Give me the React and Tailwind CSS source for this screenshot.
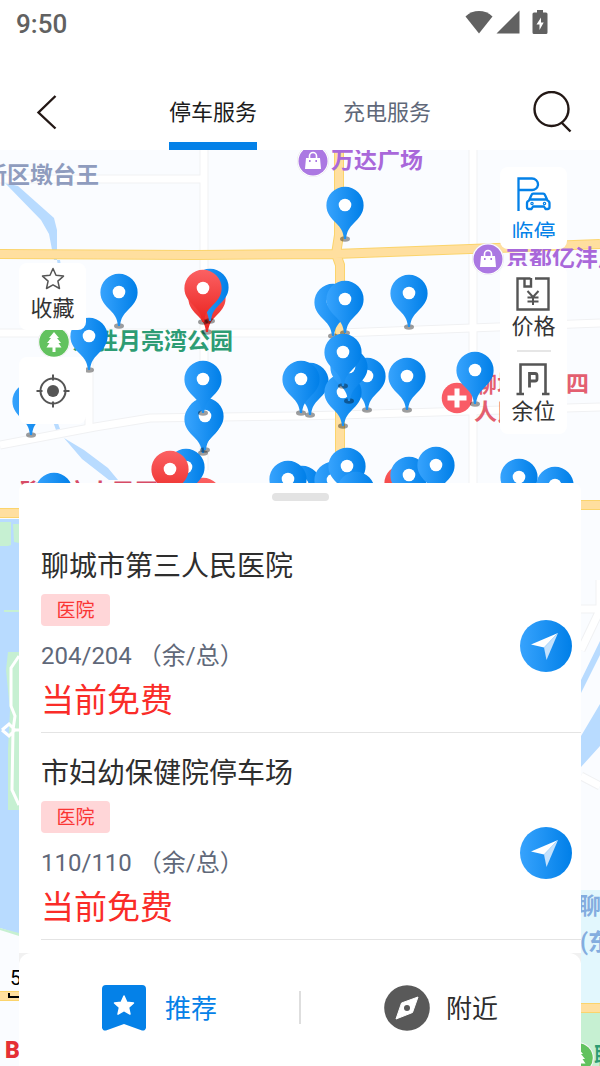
import { useState } from "react";

// 停车场标记，坐标为地图画布上圆孔中心
const pins = [
  { x: 119, y: 142 },
  { x: 345, y: 55 },
  { x: 207, y: 148, red: true },
  { x: 210, y: 137 },
  { x: 203, y: 138, red: true },
  { x: 409, y: 143 },
  { x: 333, y: 152 },
  { x: 345, y: 149 },
  { x: 89, y: 186 },
  { x: 31, y: 251 },
  { x: 203, y: 269 },
  { x: 205, y: 266 },
  { x: 203, y: 229 },
  { x: 310, y: 231 },
  { x: 301, y: 229 },
  { x: 367, y: 226 },
  { x: 343, y: 242 },
  { x: 349, y: 217 },
  { x: 343, y: 202 },
  { x: 407, y: 226 },
  { x: 475, y: 220 },
  { x: 54, y: 341 },
  { x: 203, y: 346, red: true },
  { x: 186, y: 317 },
  { x: 170, y: 319, red: true },
  { x: 302, y: 334 },
  { x: 288, y: 329 },
  { x: 333, y: 330 },
  { x: 347, y: 316 },
  { x: 356, y: 340 },
  { x: 403, y: 333, red: true },
  { x: 409, y: 325 },
  { x: 436, y: 315 },
  { x: 519, y: 327 },
  { x: 555, y: 335 },
];

const parkingLots = [
  { id: 1, name: "聊城市第三人民医院", tag: "医院", free: 204, total: 204 },
  { id: 2, name: "市妇幼保健院停车场", tag: "医院", free: 110, total: 110 },
];

const Gradients = () => (
  <svg className="absolute size-0" aria-hidden="true">
    <defs>
      <linearGradient id="blue" x1="0" y1="0" x2="1" y2="0">
        <stop offset="0" stopColor="#37a3fd" />
        <stop offset="1" stopColor="#007fe8" />
      </linearGradient>
      <linearGradient id="red" x1="0" y1="0" x2="0" y2="1">
        <stop offset="0" stopColor="#fb6163" />
        <stop offset="1" stopColor="#ea2420" />
      </linearGradient>
    </defs>
  </svg>
);

const Pin = ({ x, y, red }) => (
  <button
    aria-label="停车场"
    className="absolute h-[56px] w-[38px]"
    style={{ left: x - 19, top: y - 19 }}
  >
    <svg viewBox="0 0 38 56" className="size-full">
      <ellipse cx="19" cy="53" rx="5" ry="2.7" fill="#000" fillOpacity=".38" />
      <path
        fillRule="evenodd"
        fill={red ? "url(#red)" : "url(#blue)"}
        d="M19 .8A18.5 18.5 0 0 1 37.6 19.5c0 8-5 13-9.6 17.5-4.500 4.500-7.200 8-8 16h-2c-.8-8-3.500-11.500-8-16C5.400 32.500.4 27.500.4 19.500A18.500 18.500 0 0 1 19 .8Z"
      />
      <circle cx="19" cy="19" r="6.3" fill="#fff" />
    </svg>
  </button>
);

const MapBase = () => (
  <svg
    viewBox="0 0 600 916"
    className="absolute top-0 left-0 h-[916px] w-[600px]"
    fill="none"
    aria-hidden="true"
  >
    {/* 水系 */}
    <path
      fill="#b8dbff"
      d="M5 33 18 36 54 68 57 80V110H54L49 84 41 70ZM57 110h3l2 12h-3ZM76 180l7 20-2 2-7-6ZM50 263l6 17 4-1-6-17ZM64 288l20 12 24 18 10 12h-9L82 309Z"
    />
    <path fill="#b8dbff" d="M0 369H19V784L0 778Z" />
    <path
      fill="#c6f0d2"
      d="M0 372H11V395L8 396H0ZM13 374h6v19l-5-1ZM4 460h15v2H4ZM8 502H19V660H8V600l2-40-4-40ZM0 778l19 5v3L0 780Z"
    />
    <path stroke="#fff" strokeWidth="3" d="M19 506 11 518V556L15 566 13 580 12 640 19 655M2 580l7-6 6 6M2 580l7 6 6-6h4" />
    <path fill="#b8dbff" d="M600 491V505L581 543V530ZM600 554V596L581 617V586Z" />
    <path fill="#e2f7fd" d="M581 740H600V853H581Z" />
    <path fill="#c6f0d2" d="M581 858H600V916H581Z" />

    {/* 普通道路 */}
    <g stroke="#f0f1f3" strokeWidth="9">
      <path d="M0 29H203M204 0V320M473 0V333M89 183V280" />
      <path d="M0 183H340L600 173M0 295 95 277 150 268 300 266 340 265 600 257" />
      <path d="M581 459H600M600 430V460L581 500M581 626 600 636" />
    </g>
    <g stroke="#fff" strokeWidth="7">
      <path d="M0 29H203M204 0V320M473 0V333M89 183V280" />
      <path d="M0 183H340L600 173M0 295 95 277 150 268 300 266 340 265 600 257" />
      <path d="M581 459H600M600 430V460L581 500M581 626 600 636" />
    </g>

    {/* 主干道 */}
    <g stroke="#fbd46c" strokeWidth="10">
      <path d="M339 0V85L336 104 340 115V333M0 104 195 105 335 104 470 99 600 94" />
      <path d="M0 363H19M581 355H600M0 846H19M581 858H600" />
    </g>
    <g stroke="#ffdf9f" strokeWidth="8">
      <path d="M339 0V85L336 104 340 115V333M0 104 195 105 335 104 470 99 600 94" />
      <path d="M0 363H19M581 355H600M0 846H19M581 858H600" />
    </g>
    <path stroke="#000" strokeWidth="2" d="M9 843V847H40V843" />
  </svg>
);

const MallIcon = () => (
  <svg viewBox="0 0 32 32" className="size-8">
    <circle cx="16" cy="16" r="16" fill="#e6e6ea" />
    <circle cx="16" cy="16" r="15.500" fill="#fff" />
    <circle cx="16" cy="16" r="14.500" fill="#ab78e2" />
    <path fill="#fff" d="M9 13h14l1 11H8Z" />
    <path stroke="#fff" strokeWidth="1.600" fill="none" d="M12.500 14v-3a3.500 3.500 0 0 1 7 0v3" />
    <path fill="#ab78e2" d="M12 15h1.600v2H12ZM18.400 15H20v2h-1.600Z" />
  </svg>
);

const TreeIcon = () => (
  <svg viewBox="0 0 32 32" className="size-8">
    <circle cx="16" cy="16" r="16" fill="#e6e6ea" />
    <circle cx="16" cy="16" r="15.500" fill="#fff" />
    <circle cx="16" cy="16" r="14.800" fill="#62c25f" />
    <path
      fill="#fff"
      d="m16 6 5 6h-2l4 5h-2.500l3 4.500H17.500V26h-3v-4.500h-6l3-4.500H9l4-5h-2Z"
    />
  </svg>
);

const HospitalIcon = () => (
  <svg viewBox="0 0 32 32" className="size-8">
    <circle cx="16" cy="16" r="16" fill="#fff" />
    <circle cx="16" cy="16" r="15.300" fill="#f95c66" />
    <path fill="#fff" d="M13.500 6.500h5v7h7v5h-7v7h-5v-7h-7v-5h7Z" />
  </svg>
);

const MapLabels = () => (
  <div className="text-[23px] leading-7 font-bold whitespace-nowrap">
    <span className="absolute top-[12px] left-[-16px] text-[#8f9cbe]">新区墩台王</span>
    <span className="absolute top-[-5px] left-[297px]"><MallIcon /></span>
    <span className="absolute top-[-3px] left-[331px] text-[#a968da]">万达广场</span>
    <span className="absolute top-[93px] left-[472px]"><MallIcon /></span>
    <span className="absolute top-[95px] left-[506px] text-[#a968da]">京都亿沣广场</span>
    <span className="absolute top-[176px] left-[38px]"><TreeIcon /></span>
    <span className="absolute top-[178px] left-[72px] text-[#2d9c74]">东胜月亮湾公园</span>
    <span className="absolute top-[232px] left-[441px]"><HospitalIcon /></span>
    <span className="absolute top-[221px] left-[474px] text-[#e35f70]">
      聊城市第四
      <br />
      人民医院
    </span>
    <span className="absolute top-[329px] left-[20px] text-[#d74b66]">聊城市人民医院</span>
    <span className="absolute top-[743px] left-[578px] text-[#84addf]">聊城大学</span>
    <span className="absolute top-[779px] left-[580px] text-[#84addf]">(东校区)</span>
    <span className="absolute top-[892px] left-[562px]"><TreeIcon /></span>
    <span className="absolute top-[893px] left-[594px] text-[#2d9c74]">聊城公园</span>
    <span className="absolute top-[814px] left-[10px] text-[20px] font-normal text-black">500米</span>
    <span className="absolute top-[887px] left-[5px] font-black text-[#e52f35]">Bai</span>
  </div>
);

const StatusBar = () => (
  <div className="flex h-12 items-center justify-between pr-[52px] pl-4 text-[#616161]">
    <span className="text-[26px] leading-8 font-medium">9:50</span>
    <div className="flex items-center gap-[3px] pb-1">
      <svg viewBox="0 0 28 24" className="h-6 w-7" fill="currentColor">
        <path d="M14 23.500.5 6.500C8-.8 20-.8 27.500 6.500Z" />
      </svg>
      <svg viewBox="0 0 24 24" className="size-6" fill="currentColor">
        <path d="M23.500.500v23H.5Z" />
      </svg>
      <svg viewBox="0 0 16 24" className="ml-[9px] h-6 w-4" fill="currentColor">
        <path
          fillRule="evenodd"
          d="M5 0h6v2.500h3a1.500 1.500 0 0 1 1.500 1.500v18.500A1.500 1.500 0 0 1 14 24H2A1.500 1.500 0 0 1 .5 22.500V4A1.500 1.500 0 0 1 2 2.500h3ZM9 7.500 4.500 14.500h3V20l4.200-7.500H9Z"
        />
      </svg>
    </div>
  </div>
);

const NavBar = ({ tab, setTab }) => (
  <div className="flex h-[102px] justify-between px-[27px] pt-6">
    <button aria-label="返回" className="flex h-20 w-10 items-center justify-center">
      <svg viewBox="0 0 24 36" className="h-9 w-6" fill="none" stroke="#231815" strokeWidth="2.400">
        <path d="M20.500 2 3.500 18.500l17 16" />
      </svg>
    </button>
    <div role="tablist" className="flex gap-[86px] text-[22px]">
      {["停车服务", "充电服务"].map((name) => (
        <button
          key={name}
          role="tab"
          aria-selected={tab === name}
          onClick={() => setTab(name)}
          className={`border-b-8 pt-[11px] ${
            tab === name
              ? "border-[#0481e8] text-[#1c1c1c]"
              : "border-transparent text-[#606879]"
          }`}
        >
          {name}
        </button>
      ))}
    </div>
    <button aria-label="搜索" className="flex h-20 w-10 items-center">
      <svg viewBox="0 0 40 42" className="h-[42px] w-10" fill="none" stroke="#231815" strokeWidth="2.400">
        <circle cx="18.500" cy="18" r="17" />
        <path d="m28.500 31.500 9 9" />
      </svg>
    </button>
  </div>
);

const ParkingCarIcon = () => (
  <svg viewBox="0 0 34 34" className="h-[34px] w-[34px]" fill="none" stroke="#0481e8" strokeWidth="2.300">
    <path d="M1.500 34V1.500H15a6 6 0 0 1 6 6v.5a6 6 0 0 1-6 5H2" />
    <path
      strokeLinejoin="round"
      d="M12 23.500 14.500 18a2 2 0 0 1 2-1.300h9.500a2 2 0 0 1 2 1.300l2.500 5.500a3 3 0 0 1 2 3V30a2 2 0 0 1-2 2h-2l-1.500-2.500H16L14.500 32H12a2 2 0 0 1-2-2v-3.500a3 3 0 0 1 2-3ZM12.500 22.500H30"
    />
    <circle cx="15" cy="26.500" r=".6" />
    <circle cx="27.500" cy="26.500" r=".6" />
  </svg>
);

const PriceIcon = () => (
  <svg viewBox="0 0 34 34" className="h-[34px] w-[34px]" fill="none" stroke="#555" strokeWidth="2.400">
    <path d="M14.500 1.500H1.500v31h31v-31H19M8.500 1.500V9.500h6.500V1" />
    <path strokeWidth="2" d="m11.500 14 5.500 6 5.500-6M17 20v8M11.500 20.500h11M11.500 24.500h11" />
  </svg>
);

const SpaceIcon = () => (
  <svg viewBox="0 0 34 34" className="h-[34px] w-[34px]" fill="none" stroke="#555" strokeWidth="2.600">
    <path d="M4.500 31V2.500h25V31M.5 32h7.500M26 32h7.500" />
    <path strokeWidth="2.800" d="M13.500 25.500v-14h5.500a2 2 0 0 1 2 2v3.500a2 2 0 0 1-2 2h-5.500" />
  </svg>
);

const MapControls = () => (
  <div className="relative flex h-[333px] items-start justify-between pr-[33px] pl-[19px] text-[22px] leading-7 text-[#333]">
    <div className="mt-[113px] flex flex-col gap-[27px]">
      <button className="flex h-[67px] w-[67px] flex-col items-center rounded-lg bg-white pt-1">
        <svg viewBox="0 0 24 24" className="size-6" fill="none" stroke="#555" strokeWidth="1.500" strokeLinejoin="round">
          <path d="m12 1.500 3 6.800 7.500.8-5.600 5 1.600 7.400L12 17.800l-6.500 3.700 1.600-7.400-5.600-5 7.500-.8Z" />
        </svg>
        <span className="mt-1">收藏</span>
      </button>
      <button aria-label="定位" className="flex h-[67px] w-[67px] items-center justify-center rounded-lg bg-white">
        <svg viewBox="0 0 34 34" className="h-[34px] w-[34px]" fill="none" stroke="#555" strokeWidth="2">
          <circle cx="17" cy="17" r="12.500" />
          <circle cx="17" cy="17" r="6" fill="#555" stroke="none" />
          <path d="M17 .5v6M17 27.500v6M.5 17h6M27.500 17h6" />
        </svg>
      </button>
    </div>

    <div className="mt-[17px] flex w-[67px] flex-col gap-[17px]">
      <button className="flex h-[82px] flex-col items-center rounded-lg bg-white pt-[10px] text-[#0481e8]">
        <ParkingCarIcon />
        <span className="mt-2 h-[19px] overflow-hidden">临停</span>
      </button>
      <div className="flex flex-col items-center rounded-lg bg-white pt-[11px] pb-2">
        <button className="flex flex-col items-center gap-0.5">
          <PriceIcon />
          <span>价格</span>
        </button>
        <hr className="mt-[9px] mb-[10px] w-[34px] border-t-2 border-[#e6e6e6]" />
        <button className="flex flex-col items-center gap-0.5">
          <SpaceIcon />
          <span>余位</span>
        </button>
      </div>
    </div>
  </div>
);

const LotItem = ({ lot }) => (
  <li className="ml-[22px] flex items-center justify-between border-b border-[#e4e4e4] pt-[21px] pr-[9px] pb-[9px]">
    <div>
      <h2 className="text-[28px] leading-10 text-[#2e2e2e]">{lot.name}</h2>
      <div className="mt-[7px] flex h-8 w-[69px] items-center justify-center rounded bg-[#ffd6d8] pt-0.5 text-[19px] text-[#fa3534]">
        {lot.tag}
      </div>
      <p className="mt-3 text-[24px] leading-9 text-[#606879]">
        {lot.free}/{lot.total} （余/总）
      </p>
      <p className="mt-[5px] text-[33px] leading-[44px] text-[#fa2c28]">当前免费</p>
    </div>
    <button aria-label="导航" className="mt-[22px]">
      <svg viewBox="0 0 52 52" className="size-[52px]">
        <circle cx="26" cy="26" r="26" fill="url(#blue)" />
        <path fill="#fff" d="M38 13 11 24.500l13 3Z" />
        <path fill="#c4e2fd" d="m38 13-14 14.500 2.500 12.500Z" />
      </svg>
    </button>
  </li>
);

const BottomTabs = () => (
  <div className="flex-1 bg-[#f1f1f1]">
    <div className="flex h-full items-start rounded-t-xl bg-white pt-8 pb-9 text-[26px]">
      <button className="flex flex-1 items-center justify-center gap-[18px] text-[#0481e8]">
        <svg viewBox="0 0 46 46" className="size-[46px]">
          <path fill="#0481e8" d="M5 0h36a4 4 0 0 1 4 4v38.500a3 3 0 0 1-4 2.900L23 39 5 45.400a3 3 0 0 1-4-2.900V4a4 4 0 0 1 4-4Z" />
          <path
            fill="#fff"
            stroke="#fff"
            strokeWidth="1.500"
            strokeLinejoin="round"
            d="m23 11 2.800 6.200 6.700.7-5 4.500 1.500 6.700-6-3.500-6 3.500 1.500-6.700-5-4.500 6.700-.7Z"
          />
        </svg>
        <span className="pt-0.5">推荐</span>
      </button>
      <div className="mt-[6px] h-[33px] w-0.5 bg-[#dedede]" />
      <button className="flex flex-1 items-center justify-center gap-4 text-[#2e2e2e]">
        <svg viewBox="0 0 46 46" className="size-[46px]">
          <circle cx="23" cy="23" r="22.800" fill="#595959" />
          <path fill="#fff" stroke="#fff" strokeLinejoin="round" d="m34 12-5.500 15.500L12 34l5.500-16Z" />
          <circle cx="23" cy="23" r="3" fill="#595959" />
        </svg>
        <span className="pt-0.5">附近</span>
      </button>
    </div>
  </div>
);

const App = () => {
  const [tab, setTab] = useState("停车服务");

  return (
    <div className="flex min-h-screen flex-col bg-white font-['Roboto','Noto_Sans_CJK_SC',sans-serif]">
      <Gradients />
      <header>
        <StatusBar />
        <NavBar tab={tab} setTab={setTab} />
      </header>

      <main className="relative flex flex-1 flex-col overflow-hidden bg-[#fafcff]">
        <div className="absolute inset-0 overflow-hidden">
          <MapBase />
          <MapLabels />
          {pins.map((pin, index) => (
            <Pin key={index} {...pin} />
          ))}
        </div>

        <MapControls />

        {/* 底部抽屉 */}
        <section className="relative mx-[19px] flex flex-1 flex-col rounded-t-lg bg-white">
          <div className="mx-auto mt-[10px] h-2 w-[57px] rounded-full bg-[#e3e3e3]" />
          <ul className="mt-[25px] mb-[13px]">
            {parkingLots.map((lot) => (
              <LotItem key={lot.id} lot={lot} />
            ))}
          </ul>
          <BottomTabs />
        </section>
      </main>
    </div>
  );
};

export default App;
